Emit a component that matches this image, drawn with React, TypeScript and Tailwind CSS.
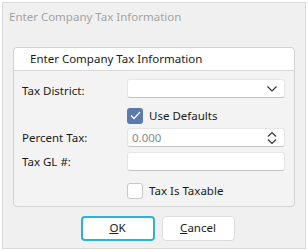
import React from 'react'

const font = { fontFamily: '"Noto Sans", "Open Sans", sans-serif' }

function Chevron() {
  return (
    <svg width="12" height="8" viewBox="0 0 12 8" className="text-[#333]">
      <path d="M1.5 1.5 L6 6 L10.5 1.5" fill="none" stroke="currentColor" strokeWidth="1.2" />
    </svg>
  )
}

function UpDown() {
  return (
    <svg width="12" height="14" viewBox="0 0 12 14" className="text-[#333]">
      <path d="M2 5.5 L6 1.5 L10 5.5" fill="none" stroke="currentColor" strokeWidth="1.2" />
      <path d="M2 8.5 L6 12.5 L10 8.5" fill="none" stroke="currentColor" strokeWidth="1.2" />
    </svg>
  )
}

function Field({ children }: { children?: React.ReactNode }) {
  return (
    <div className="flex h-[19px] w-[158px] items-center justify-between rounded-[3px] border border-[#e6e6e6] border-b-[#c4c4c4] bg-white pl-[4px] pr-[6px]">
      {children}
    </div>
  )
}

function Row({ label, low, children }: { label: string; low?: boolean; children: React.ReactNode }) {
  return (
    <div className={low ? 'flex items-start' : 'flex items-center'}>
      <div
        className={
          low
            ? 'w-[105px] pt-[4px] text-[11.5px] leading-[15px] text-[#1a1a1a]'
            : 'w-[105px] text-[11.5px] text-[#1a1a1a]'
        }
      >
        {label}
      </div>
      {children}
    </div>
  )
}

function Check({ checked, label }: { checked?: boolean; label: string }) {
  return (
    <div className="flex items-center pl-[105px]">
      {checked ? (
        <div className="flex h-[16px] w-[16px] items-center justify-center rounded-[3px] bg-[#5a79ad]">
          <svg width="11" height="9" viewBox="0 0 11 9">
            <path d="M1 4.5 L4 7.5 L10 1" fill="none" stroke="white" strokeWidth="1.3" />
          </svg>
        </div>
      ) : (
        <div className="h-[16px] w-[16px] rounded-[3px] border border-[#c8c8c8] bg-white" />
      )}
      <span className="ml-[6px] text-[11.5px] text-[#1a1a1a]">{label}</span>
    </div>
  )
}

export default function App() {
  return (
    <div className="h-[251px] w-[308px] bg-white pl-[2px] pt-[2px]" style={font}>
      <div className="flex h-[247px] w-[304px] flex-col border border-[#d9d9d9] bg-[#f0f0f0]">
        <div className="pl-[6px] pt-[6px] text-[11.5px] leading-[16px] text-[#a3a3a3]">
          Enter Company Tax Information
        </div>

        <div className="mx-[10px] mt-[22px] rounded-[4px] border border-[#d2d2d2] bg-[#f3f3f3]">
          <div className="flex h-[23px] items-center rounded-t-[4px] border-b border-[#d9d9d9] bg-white pl-[16px] text-[11.5px] text-[#1a1a1a]">
            Enter Company Tax Information
          </div>
          <div className="flex flex-col pb-[6px] pl-[8px] pt-[8px]">
            <Row label="Tax District:" low>
              <Field>
                <span />
                <Chevron />
              </Field>
            </Row>
            <div className="mt-[9px]">
              <Check checked label="Use Defaults" />
            </div>
            <div className="mt-[4px]">
              <Row label="Percent Tax:">
                <Field>
                  <span className="text-[11.5px] text-[#8a8a8a]">0.000</span>
                  <UpDown />
                </Field>
              </Row>
            </div>
            <div className="mt-[5px]">
              <Row label="Tax GL #:">
                <Field />
              </Row>
            </div>
            <div className="mt-[11px]">
              <Check label="Tax Is Taxable" />
            </div>
          </div>
        </div>

        <div className="mt-[9px] flex justify-center gap-[7px] pl-[7px]">
          <button className="h-[25px] w-[74px] rounded-[4px] border-2 border-[#2cb3cf] bg-white text-[11.5px] text-[#1a1a1a]">
            <span className="underline">O</span>K
          </button>
          <button className="h-[25px] w-[73px] rounded-[4px] border border-[#dcdcdc] bg-white text-[11.5px] text-[#1a1a1a]">
            <span className="underline">C</span>ancel
          </button>
        </div>
      </div>
    </div>
  )
}
